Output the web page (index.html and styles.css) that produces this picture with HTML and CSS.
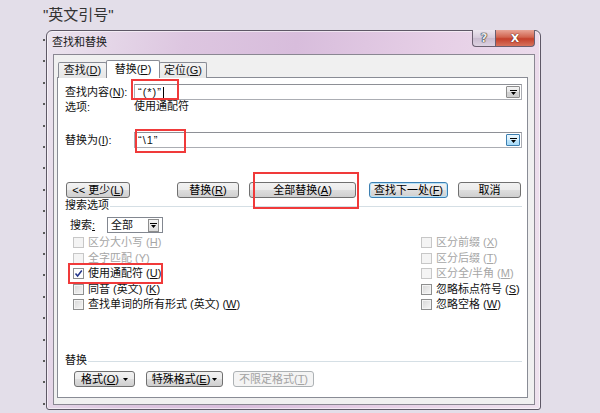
FILE: index.html
```html
<!DOCTYPE html>
<html lang="zh-CN">
<head>
<meta charset="utf-8">
<title>查找和替换</title>
<link rel="stylesheet" href="styles.css">
</head>
<body>
<div class="page">
  <div class="heading">"英文引号"</div>
  <div class="doc">
    <div class="dialog">
      <div class="titlebar">
        <span class="title">查找和替换</span>
        <div class="caption-btns">
          <span class="cap-help">?</span>
          <span class="cap-close">X</span>
        </div>
      </div>
      <div class="client">
        <div class="tabs">
          <div class="tab">查找(<u>D</u>)</div>
          <div class="tab active">替换(<u>P</u>)</div>
          <div class="tab">定位(<u>G</u>)</div>
        </div>
        <div class="panel">
          <div class="field-row">
            <span class="lbl">查找内容(<u>N</u>):</span>
            <div class="combo">
              <span class="combo-text"><span>“(*)”</span><span class="caret"></span></span>
              <span class="dd"><svg width="7" height="5" viewBox="0 0 7 5"><path d="M0 0H7V1H0Z M1 2H6L3.5 5Z" fill="#000"/></svg></span>
            </div>
          </div>
          <div class="opts-row"><span class="lbl">选项:</span><span>使用通配符</span></div>
          <div class="field-row second">
            <span class="lbl">替换为(<u>I</u>):</span>
            <div class="combo">
              <span class="combo-text"><span>“\1”</span></span>
              <span class="dd hot"><svg width="7" height="5" viewBox="0 0 7 5"><path d="M0 0H7V1H0Z M1 2H6L3.5 5Z" fill="#000"/></svg></span>
            </div>
          </div>
          <div class="btn-row">
            <button class="btn w-less"><span>&lt;&lt; 更少(<u>L</u>)</span></button>
            <button class="btn w-rep"><span>替换(<u>R</u>)</span></button>
            <button class="btn w-all"><span>全部替换(<u>A</u>)</span></button>
            <button class="btn w-next default"><span>查找下一处(<u>F</u>)</span></button>
            <button class="btn w-cancel"><span>取消</span></button>
          </div>
          <div class="group-title"><span>搜索选项</span></div>
          <div class="search-row">
            <span class="search-lbl">搜索<u>:</u></span>
            <div class="select">
              <span class="select-text">全部</span>
              <span class="sel-dd"><svg width="7" height="5" viewBox="0 0 7 5"><path d="M0 0H7V1H0Z M1 2H6L3.5 5Z" fill="#000"/></svg></span>
            </div>
          </div>
          <div class="checkgrid">
            <div class="chk disabled"><span class="cb"></span><span>区分大小写 (<u>H</u>)</span></div>
            <div class="chk disabled"><span class="cb"></span><span>区分前缀 (<u>X</u>)</span></div>
            <div class="chk disabled"><span class="cb"></span><span>全字匹配 (<u>Y</u>)</span></div>
            <div class="chk disabled"><span class="cb"></span><span>区分后缀 (<u>T</u>)</span></div>
            <div class="chk"><span class="cb checked"><svg width="9" height="9" viewBox="0 0 9 9"><path d="M1.5 4.5L3.6 7L7.8 1.5" fill="none" stroke="#23358a" stroke-width="1.5"/></svg></span><span>使用通配符 (<u>U</u>)</span></div>
            <div class="chk disabled"><span class="cb"></span><span>区分全/半角 (<u>M</u>)</span></div>
            <div class="chk"><span class="cb"></span><span>同音 (英文) (<u>K</u>)</span></div>
            <div class="chk"><span class="cb"></span><span>忽略标点符号 (<u>S</u>)</span></div>
            <div class="chk"><span class="cb"></span><span>查找单词的所有形式 (英文) (<u>W</u>)</span></div>
            <div class="chk"><span class="cb"></span><span>忽略空格 (<u>W</u>)</span></div>
          </div>
          <div class="group-title replace-title"><span>替换</span></div>
          <div class="bottom-row">
            <button class="btn w-fmt"><span>格式(<u>O</u>)</span><svg width="5" height="3" viewBox="0 0 5 3"><path d="M0 0H5L2.5 3Z" fill="#000"/></svg></button>
            <button class="btn w-special"><span>特殊格式(<u>E</u>)</span><svg width="5" height="3" viewBox="0 0 5 3"><path d="M0 0H5L2.5 3Z" fill="#000"/></svg></button>
            <button class="btn w-nofmt" disabled><span>不限定格式(<u>T</u>)</span></button>
          </div>
        </div>
      </div>
    </div>
  </div>
  <div class="mark mark-find"></div>
  <div class="mark mark-repl"></div>
  <div class="mark mark-all"></div>
  <div class="mark mark-wild"></div>
</div>
</body>
</html>
```
FILE: styles.css
```css
* { box-sizing: border-box; margin: 0; padding: 0; }
html, body { width: 600px; height: 413px; overflow: hidden; }
body {
  background: #e3dee9;
  font-family: "Liberation Sans", "Noto Sans CJK SC", sans-serif;
  color: #111;
}
u { text-decoration: underline; text-underline-offset: 1px; }
.page { position: relative; height: 413px; }

.heading {
  height: 30px;
  padding: 5px 0 0 43px;
  font-size: 15px;
  line-height: 20px;
  color: #333;
}

.doc {
  height: 383px;
  padding-left: 46px;
  background: repeating-linear-gradient(to bottom, transparent 0 9px, #5a5a5a 9px 11px, transparent 11px 21.4px) 43px 0 / 2px 100% no-repeat;
}

.dialog {
  width: 495px;
  height: 380px;
  border: 1px solid #5e5866;
  border-radius: 6px 6px 3px 3px;
  background: linear-gradient(100deg, #ebe4ee 0%, #ddc6e0 25%, #d8bddc 45%, #e6cfe6 70%, #eee2ee 100%);
  display: flex;
  flex-direction: column;
  box-shadow: inset 0 0 0 1px rgba(255,255,255,0.55);
}

.titlebar {
  height: 23px;
  display: flex;
  align-items: flex-start;
}
.title {
  padding-left: 5px;
  font-size: 11px;
  line-height: 22px;
  color: #1a1a1a;
}
.caption-btns {
  margin-left: auto;
  margin-right: 5px;
  margin-top: -1px;
  display: flex;
}
.cap-help, .cap-close {
  height: 17px;
  display: flex;
  align-items: center;
  justify-content: center;
  font-family: "DejaVu Sans", sans-serif;
  font-weight: bold;
  border: 1px solid #6a5f70;
  border-top: none;
}
.cap-help {
  width: 23px;
  border-radius: 0 0 0 4px;
  background: linear-gradient(#ece6ef, #d6cadb 50%, #c9bbcf 51%, #ddd2e1);
  font-size: 12px;
  color: #e8e8e8;
  text-shadow: 0 0 1px #222, 0 0 1px #222, 0 0 1px #222;
  border-right: none;
}
.cap-close {
  width: 40px;
  border-radius: 0 0 4px 0;
  background: linear-gradient(#e8a496, #d1644f 45%, #c4402b 55%, #d7725c);
  font-size: 11px;
  color: #fff;
  text-shadow: 0 0 1px #5a1b12, 0 0 1px #5a1b12;
}

.client {
  flex: 1;
  margin: 0 5px 4px 6px;
  background: #f0f0f0;
  border: 1px solid #8a8792;
  padding: 5px 6px 0 3px;
  display: flex;
  flex-direction: column;
}

.tabs {
  height: 17px;
  display: flex;
  padding-left: 1px;
  position: relative;
  z-index: 1;
}
.tab {
  margin-top: 2px;
  height: 16px;
  border: 1px solid #898c95;
  border-bottom: none;
  border-radius: 2px 2px 0 0;
  background: linear-gradient(#f3f3f3, #e6e6e6);
  font-size: 11px;
  line-height: 14px;
  text-align: center;
  color: #111;
  white-space: nowrap;
}
.tab:first-child { width: 49px; }
.tab.active {
  width: 54px;
  margin-top: 0;
  height: 18px;
  background: #fff;
  margin-left: -1px;
  margin-right: -1px;
  line-height: 16px;
}
.tab:last-child { width: 48px; }

.panel {
  height: 321px;
  background: #fff;
  border: 1px solid #898c95;
  padding: 6px 5px 0 7px;
  font-size: 11px;
}

.field-row {
  height: 16px;
  display: flex;
  align-items: center;
}
.field-row.second { margin-top: 19px; }
.lbl {
  width: 69px;
  flex: none;
  line-height: 14px;
  white-space: nowrap;
}
.combo {
  flex: 1;
  height: 16px;
  border: 1px solid #abadb3;
  border-top-color: #8e9096;
  background: #fff;
  display: flex;
  align-items: center;
  padding: 0 1px 0 3px;
}
.combo-text {
  flex: 1;
  line-height: 13px;
  display: flex;
  align-items: center;
  letter-spacing: 1px;
}
.caret {
  display: inline-block;
  width: 1px;
  height: 11px;
  background: #000;
  margin-left: 1px;
}
.dd {
  width: 14px;
  height: 12px;
  border: 1px solid #8d8d8d;
  border-radius: 1px;
  background: linear-gradient(#f4f4f4, #e4e4e4 50%, #d3d3d3 51%, #cfcfcf);
  display: flex;
  align-items: center;
  justify-content: center;
}
.dd.hot {
  border-color: #3c7fb1;
  background: linear-gradient(#eaf6fd, #d9f0fc 50%, #bee6fd 51%, #a7d9f5);
}

.opts-row {
  height: 13px;
  line-height: 13px;
  display: flex;
}

.btn {
  height: 16px;
  border: 1px solid #707070;
  border-radius: 3px;
  background: linear-gradient(#f2f2f2 0%, #ebebeb 48%, #dddddd 52%, #cfcfcf 100%);
  font-family: inherit;
  font-size: 11px;
  line-height: 13px;
  color: #000;
  display: flex;
  align-items: center;
  justify-content: center;
  gap: 3px;
  padding: 0;
  white-space: nowrap;
}
.btn.default {
  border-color: #3c7fb1;
  box-shadow: inset 0 0 0 1px #b7e1f7;
}
.btn:disabled {
  border-color: #adb2b5;
  background: #f4f4f4;
  color: #a3a3a3;
}

.btn-row {
  margin-top: 34px;
  height: 16px;
  display: flex;
  gap: 10px;
  padding-left: 1px;
}
.w-less { width: 64px; margin-right: auto; }
.w-rep { width: 62px; }
.w-all { width: 107px; }
.w-next { width: 79px; margin-left: 3px; }
.w-cancel { width: 63px; margin-right: 1px; }

.group-title {
  margin-top: 1px;
  height: 12px;
  display: flex;
  align-items: center;
  gap: 1px;
  line-height: 12px;
}
.group-title::after {
  content: "";
  flex: 1;
  height: 1px;
  margin-top: 2px;
  background: #d5dfe5;
}

.search-row {
  margin-top: 6px;
  height: 16px;
  display: flex;
  align-items: center;
  padding-left: 5px;
}
.search-lbl {
  width: 37px;
  line-height: 13px;
}
.select {
  width: 56px;
  height: 16px;
  border: 1px solid #828790;
  display: flex;
  align-items: center;
  padding: 0 3px 0 3px;
}
.select-text { flex: 1; line-height: 13px; }
.sel-dd {
  width: 11px;
  height: 13px;
  border: 1px solid #8d8d8d;
  background: linear-gradient(#f4f4f4, #dcdcdc);
  display: flex;
  align-items: center;
  justify-content: center;
}

.checkgrid {
  margin-top: 2px;
  margin-left: 8px;
  display: grid;
  grid-template-columns: 348px 1fr;
  grid-auto-rows: 15.5px;
}
.chk {
  display: flex;
  align-items: center;
  gap: 4px;
  line-height: 13px;
  color: #111;
  white-space: pre;
}
.chk.disabled { color: #a6a6a6; }
.cb {
  width: 11px;
  height: 11px;
  flex: none;
  border: 1px solid #8e8f8f;
  background: linear-gradient(135deg, #d6d6d6, #f7f7f7);
  box-shadow: inset 0 0 0 1px #f4f4f4;
  display: flex;
  align-items: center;
  justify-content: center;
}
.chk.disabled .cb {
  border-color: #c7c7c7;
  background: #f4f4f4;
  box-shadow: none;
}
.cb.checked { background: #fff; box-shadow: none; }

.replace-title { margin-top: 41.5px; }

.bottom-row {
  margin-top: 5px;
  height: 16px;
  display: flex;
  padding-left: 9px;
}
.w-fmt { width: 61px; gap: 4px; }
.w-special { width: 77px; margin-left: 11px; gap: 2px; }
.w-nofmt { width: 81px; margin-left: 10px; }

.mark {
  position: absolute;
  border: 2px solid #f03a3a;
}
.mark-find { left: 131px; top: 79px; width: 48px; height: 21px; }
.mark-repl { left: 135px; top: 129px; width: 51px; height: 24px; }
.mark-all { left: 253px; top: 172px; width: 106px; height: 37px; }
.mark-wild { left: 68px; top: 263px; width: 95px; height: 21px; }
```
